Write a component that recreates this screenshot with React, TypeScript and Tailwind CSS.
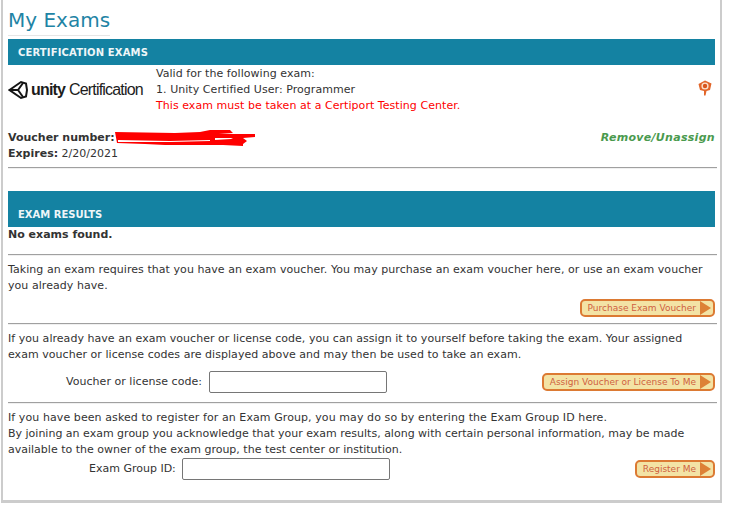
import type { ReactNode } from 'react';

const FONT = "font-['DejaVu_Sans',Verdana,sans-serif]";

function SectionBar({ title, className }: { title: string; className: string }) {
  return (
    <div className={`bg-[#1482a2] pl-[10px] text-[10px] font-bold text-[#eef6f8] ${className}`}>
      {title}
    </div>
  );
}

function Rule({ className = '' }: { className?: string }) {
  return <div className={`h-[2px] w-[709px] border-t border-[#a0a0a0] bg-[#f0f0f0] ${className}`} />;
}

function ActionButton({ children }: { children: ReactNode }) {
  return (
    <button className="flex h-[18px] items-center rounded-[5px] border-2 border-[#dc7a33] bg-[#f3e3a5] pl-[6px] pr-[2px] text-[9px] leading-none tracking-normal text-[#cf5f3f]">
      <span>{children}</span>
      <svg width="11" height="14" viewBox="0 0 11 14" className="ml-[4px] shrink-0">
        <path d="M0 0 L11 7 L0 14 Z" fill="#dd8136" />
      </svg>
    </button>
  );
}

function UnityLogo() {
  return (
    <div className="flex h-[20px] w-[136px] items-center">
      <svg width="20" height="20" viewBox="0 0 20 20" className="shrink-0">
        <g fill="none" stroke="#151515" strokeWidth="2" strokeLinejoin="miter">
          <path d="M1.5 10 L13 2 L18 3.5 L19 10 L18 16.5 L13 18 Z" />
          <path d="M1.5 10 L10 10 L15 3" />
          <path d="M10 10 L15 17" />
        </g>
      </svg>
      <span className="ml-[3px] whitespace-nowrap font-['Liberation_Sans',Arial,sans-serif] text-[16px] leading-none tracking-[-0.8px] text-[#1c1c1c]">
        <span className="font-bold">unity</span> Certification
      </span>
    </div>
  );
}

function RedactedScribble() {
  return (
    <svg width="140" height="18" viewBox="0 0 140 18" className="shrink-0">
      <path
        d="M0 2 L60 3 L85 2 L95 0 L115 0 L118 3 L104 4 L140 4 L140 7 L128 8 L132 11 L128 14 L128 16 L108 15 L50 15 L30 14 L2 13 Z"
        fill="#fe0000"
      />
      <path d="M3 10 L55 11 L95 10 L95 11 L55 12 L3 12 Z" fill="#ffffff" />
      <path d="M100 8 L118 8 L116 9 L100 10 Z" fill="#ffffff" />
    </svg>
  );
}

export default function App() {
  return (
    <div className={`h-[514px] w-[735px] bg-white ${FONT} text-[11px] leading-[16px] text-[#333]`}>
      <div className="ml-[1px] h-[503px] w-[721px] border-x-2 border-b-[3px] border-[#cccccc] pl-[5px] pr-[5px]">
        {/* Title */}
        <h1 className="h-[36px] w-[102px] whitespace-nowrap border-b border-[#e6e6e6] pt-[6px] text-[20px] leading-[28px] text-[#1f84a5]">
          My Exams
        </h1>

        {/* Certification exams */}
        <SectionBar title="CERTIFICATION EXAMS" className="mt-[3px] h-[26px] leading-[27px] tracking-[0.15px]" />
        <div className="mt-[1px] flex h-[48px] tracking-[0.05px]">
          <div className="flex w-[148px] items-center">
            <UnityLogo />
          </div>
          <div className="flex-1">
            <p>Valid for the following exam:</p>
            <p>1. Unity Certified User: Programmer</p>
            <p className="text-[#fe0000]">This exam must be taken at a Certiport Testing Center.</p>
          </div>
          <div className="pr-[3px] pt-[14px]">
            <svg width="14" height="16" viewBox="0 0 14 16">
              <path d="M0.5 4 L7 0.5 L13.5 3.5 L12 10 L8.5 11 L7.5 15.5 L6 15.5 L6 11 L2 10 Z" fill="#e2662a" />
              <circle cx="7" cy="6" r="3.6" fill="#fbe3cf" />
              <circle cx="7" cy="6" r="2.2" fill="#d9561d" />
            </svg>
          </div>
        </div>

        <div className="mt-[16px] flex items-start justify-between">
          <div>
            <div className="flex h-[16px]">
              <b>Voucher number:</b>
              <RedactedScribble />
            </div>
            <p>
              <b>Expires:</b> 2/20/2021
            </p>
          </div>
          <a className="font-bold italic tracking-[0.3px] text-[#4a9a4e]">Remove/Unassign</a>
        </div>
        <Rule className="mt-[5px]" />

        {/* Exam results */}
        <SectionBar title="EXAM RESULTS" className="mt-[22px] h-[36px] pt-[16px] leading-[16px]" />
        <p className="font-bold">No exams found.</p>
        <Rule className="mt-[11px]" />

        <div className="h-[67px] pt-[6px] tracking-[0.055px]">
          <p>
            Taking an exam requires that you have an exam voucher. You may purchase an exam voucher here, or use an
            exam voucher
            <br />
            you already have.
          </p>
          <div className="mt-[5px] flex justify-end">
            <ActionButton>Purchase Exam Voucher</ActionButton>
          </div>
        </div>
        <Rule />

        <div className="h-[77px] pt-[6px] tracking-[0.04px]">
          <p className="whitespace-nowrap">
            If you already have an exam voucher or license code, you can assign it to yourself before taking the exam.
            Your assigned
            <br />
            exam voucher or license codes are displayed above and may then be used to take an exam.
          </p>
          <div className="mt-[8px] flex items-center justify-between">
            <label className="flex items-center pl-[58px]">
              Voucher or license code:
              <input className="ml-[7px] h-[22px] w-[178px] rounded-[2px] border border-[#767676] bg-white" />
            </label>
            <ActionButton>Assign Voucher or License To Me</ActionButton>
          </div>
        </div>
        <Rule />

        <div className="pt-[6px]">
          <p className="tracking-[0.085px]">
            If you have been asked to register for an Exam Group, you may do so by entering the Exam Group ID here.
          </p>
          <p className="whitespace-nowrap">
            By joining an exam group you acknowledge that your exam results, along with certain personal information,
            may be made
            <br />
            available to the owner of the exam group, the test center or institution.
          </p>
          <div className="flex items-center justify-between">
            <label className="flex items-center pl-[81px]">
              Exam Group ID:
              <input className="ml-[6px] h-[22px] w-[208px] rounded-[2px] border border-[#767676] bg-white" />
            </label>
            <ActionButton>Register Me</ActionButton>
          </div>
        </div>
      </div>
    </div>
  );
}
